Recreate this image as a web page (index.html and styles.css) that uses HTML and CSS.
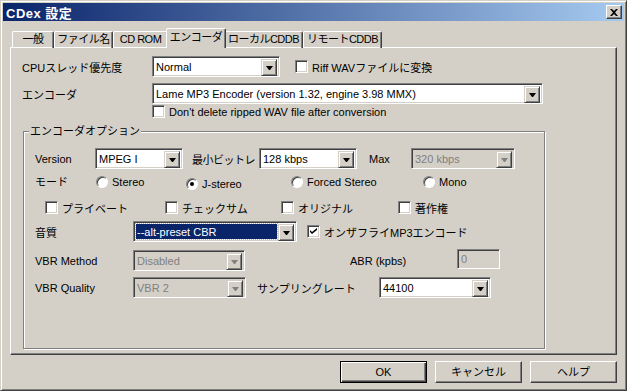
FILE: index.html
```html
<!DOCTYPE html>
<html lang="ja">
<head>
    <meta charset="UTF-8">
    <title>CDex 設定</title>
    <link rel="stylesheet" href="styles.css">
</head>
<body>

<div class="window">
    <!-- タイトルバー -->
    <div class="titlebar">
        <span class="title">CDex 設定</span>
        <span class="close">
            <svg width="8" height="7" viewBox="0 0 8 7"><path d="M0 0h2l2 2 2-2h2L5 3.5 8 7H6L4 5 2 7H0l3-3.5z" fill="#000"/></svg>
        </span>
    </div>

    <div class="client">
        <!-- タブ -->
        <div class="tabs">
            <div class="tab">一般</div>
            <div class="tab">ファイル名</div>
            <div class="tab">CD ROM</div>
            <div class="tab active">エンコーダ</div>
            <div class="tab">ローカルCDDB</div>
            <div class="tab">リモートCDDB</div>
        </div>

        <div class="panel">
            <div class="row r1">
                <span class="label w130">CPUスレッド優先度</span>
                <div class="combo w128"><span class="val">Normal</span><span class="drop"></span></div>
                <label class="check ml15"><span class="cb"></span>Riff WAVファイルに変換</label>
            </div>
            <div class="row r2">
                <span class="label w130">エンコーダ</span>
                <div class="combo w391"><span class="val">Lame MP3 Encoder (version 1.32, engine 3.98 MMX)</span><span class="drop"></span></div>
            </div>
            <div class="row r3">
                <label class="check ml130"><span class="cb"></span>Don't delete ripped WAV file after conversion</label>
            </div>

            <!-- エンコーダオプション -->
            <div class="group">
                <span class="legend">エンコーダオプション</span>

                <div class="row g1">
                    <span class="label w60">Version</span>
                    <div class="combo w88"><span class="val">MPEG I</span><span class="drop"></span></div>
                    <span class="label w76 pl9 tight">最小ビットレ</span>
                    <div class="combo w98"><span class="val">128 kbps</span><span class="drop"></span></div>
                    <span class="label w54 pl12">Max</span>
                    <div class="combo w104 off"><span class="val">320 kbps</span><span class="drop"></span></div>
                </div>

                <div class="row g2">
                    <span class="label w61 up">モード</span>
                    <label class="radio w90"><span class="rb"></span>Stereo</label>
                    <label class="radio w105 low"><span class="rb on"></span>J-stereo</label>
                    <label class="radio w132"><span class="rb"></span>Forced Stereo</label>
                    <label class="radio"><span class="rb"></span>Mono</label>
                </div>

                <div class="row g3">
                    <label class="check w120"><span class="cb"></span>プライベート</label>
                    <label class="check w116"><span class="cb"></span>チェックサム</label>
                    <label class="check w117"><span class="cb"></span>オリジナル</label>
                    <label class="check"><span class="cb"></span>著作権</label>
                </div>

                <div class="row g4">
                    <span class="label w98">音質</span>
                    <div class="combo w164"><span class="val sel">--alt-preset CBR</span><span class="drop"></span></div>
                    <label class="check ml10"><span class="cb on"><svg width="7" height="7" viewBox="0 0 7 7"><path d="M0 2l2 2 5-4v2L2 6 0 4z" fill="#000"/></svg></span>オンザフライMP3エンコード</label>
                </div>

                <div class="row g5">
                    <span class="label w98">VBR Method</span>
                    <div class="combo w112 off"><span class="val">Disabled</span><span class="drop"></span></div>
                    <span class="label w107 ml105">ABR (kpbs)</span>
                    <div class="edit off">0</div>
                </div>

                <div class="row g6">
                    <span class="label w98">VBR Quality</span>
                    <div class="combo w113 off"><span class="val">VBR 2</span><span class="drop"></span></div>
                    <span class="label w133 pl11">サンプリングレート</span>
                    <div class="combo w112"><span class="val">44100</span><span class="drop"></span></div>
                </div>
            </div>
        </div>

        <!-- ボタン -->
        <div class="buttons">
            <div class="btn def">OK</div>
            <div class="btn">キャンセル</div>
            <div class="btn">ヘルプ</div>
        </div>
    </div>
</div>

</body>
</html>
```

FILE: styles.css
```css
body {
    margin: 0;
    padding: 0;
    background-color: #d4d0c8;
    font-family: "Liberation Sans", "Noto Sans CJK JP", sans-serif;
    font-size: 11px;
    color: #000000;
}
.window {
    width: 627px;
    height: 391px;
    box-sizing: border-box;
    border: 1px solid;
    border-color: #d4d0c8 #404040 #404040 #d4d0c8;
    box-shadow: inset 1px 1px #ffffff, inset -1px -1px #808080;
    padding: 2px;
    background-color: #d4d0c8;
}
.titlebar {
    height: 18px;
    background: linear-gradient(to right, #0a246a, #a6caf0);
    display: flex;
    align-items: center;
    justify-content: space-between;
    padding: 0 2px 0 3px;
}
.title {
    color: #ffffff;
    font-weight: bold;
    font-size: 13px;
    letter-spacing: 0.5px;
}
.close {
    width: 16px;
    height: 14px;
    box-sizing: border-box;
    border: 1px solid;
    border-color: #ffffff #404040 #404040 #ffffff;
    box-shadow: inset -1px -1px #808080;
    background-color: #d4d0c8;
    display: flex;
    align-items: center;
    justify-content: center;
}
.client {
    padding: 7px 4px 0 7px;
}

/* タブ */
.tabs {
    display: flex;
    align-items: flex-end;
    height: 20px;
    margin-bottom: -1px;
    padding-left: 2px;
}
.tab {
    height: 17px;
    box-sizing: border-box;
    border-top: 1px solid #ffffff;
    border-left: 1px solid #ffffff;
    border-right: 1px solid #404040;
    box-shadow: inset -1px 0 #808080;
    border-radius: 2px 2px 0 0;
    text-align: center;
    line-height: 15px;
    white-space: nowrap;
    letter-spacing: -0.5px;
}
.tab:nth-child(1) { width: 42px; }
.tab:nth-child(2) { width: 59px; }
.tab:nth-child(3) { width: 55px; }
.tab:nth-child(5) { width: 79px; }
.tab:nth-child(6) { width: 79px; }
.tab.active {
    width: 60px;
    height: 20px;
    margin: 0 -2px;
    position: relative;
    z-index: 1;
    background-color: #d4d0c8;
    line-height: 17px;
}
.panel {
    width: 607px;
    height: 308px;
    box-sizing: border-box;
    border: 1px solid;
    border-color: #ffffff #404040 #404040 #ffffff;
    box-shadow: inset -1px -1px #808080;
    padding: 8px 0 0 11px;
}

/* 行 */
.row {
    display: flex;
    align-items: center;
    white-space: nowrap;
}
.r1 { height: 21px; }
.r2 { height: 21px; margin-top: 6px; }
.r3 { height: 13px; margin-top: 1px; }
.label { display: block; box-sizing: border-box; }
.tight { letter-spacing: -0.5px; }
.w54 { width: 54px; }
.w60 { width: 60px; }
.w61 { width: 61px; }
.w76 { width: 76px; }
.w88 { width: 88px; }
.w90 { width: 90px; }
.w98 { width: 98px; }
.w104 { width: 104px; }
.w105 { width: 105px; }
.w107 { width: 107px; }
.w112 { width: 112px; }
.w113 { width: 113px; }
.w116 { width: 116px; }
.w117 { width: 117px; }
.w120 { width: 120px; }
.w128 { width: 128px; }
.w130 { width: 130px; }
.w132 { width: 132px; }
.w133 { width: 133px; }
.w164 { width: 164px; }
.w391 { width: 391px; }
.pl9 { padding-left: 9px; }
.pl11 { padding-left: 11px; }
.pl12 { padding-left: 12px; }
.ml10 { margin-left: 10px; }
.ml15 { margin-left: 15px; }
.ml105 { margin-left: 105px; }
.ml130 { margin-left: 130px; }

/* コンボボックス */
.combo {
    display: flex;
    height: 21px;
    box-sizing: border-box;
    border: 1px solid;
    border-color: #808080 #ffffff #ffffff #808080;
    box-shadow: inset 1px 1px #404040, inset -1px -1px #d4d0c8;
    background-color: #ffffff;
    padding: 2px;
    flex-shrink: 0;
}
.combo .val {
    flex: 1;
    padding-left: 1px;
    line-height: 17px;
    overflow: hidden;
}
.combo .val.sel {
    background-color: #0a246a;
    color: #ffffff;
    outline: 1px dotted #c8c070;
    margin-right: 1px;
}
.drop {
    width: 16px;
    height: 17px;
    box-sizing: border-box;
    border: 1px solid;
    border-color: #d4d0c8 #404040 #404040 #d4d0c8;
    box-shadow: inset 1px 1px #ffffff, inset -1px -1px #808080;
    background-color: #d4d0c8;
    display: flex;
    align-items: center;
    justify-content: center;
}
.drop::after {
    content: "";
    width: 1px;
    height: 0;
    border-left: 3px solid transparent;
    border-right: 3px solid transparent;
    border-top: 4px solid #000000;
}
.combo.off {
    background-color: #d4d0c8;
    color: #808080;
}
.combo.off .drop::after {
    border-top-color: #808080;
}
.edit {
    width: 43px;
    height: 20px;
    box-sizing: border-box;
    border: 1px solid;
    border-color: #808080 #ffffff #ffffff #808080;
    box-shadow: inset 1px 1px #404040, inset -1px -1px #d4d0c8;
    padding: 2px 3px;
    line-height: 14px;
    margin-top: -4px;
}
.edit.off {
    color: #808080;
}

/* チェックボックス・ラジオ */
.check, .radio {
    display: flex;
    align-items: center;
    gap: 4px;
}
.cb {
    width: 13px;
    height: 13px;
    box-sizing: border-box;
    border: 1px solid;
    border-color: #808080 #ffffff #ffffff #808080;
    box-shadow: inset 1px 1px #404040, inset -1px -1px #d4d0c8;
    background-color: #ffffff;
    display: flex;
    align-items: center;
    justify-content: center;
    flex-shrink: 0;
}
.rb {
    width: 12px;
    height: 12px;
    box-sizing: border-box;
    border-radius: 50%;
    border: 1px solid;
    border-color: #808080 #ffffff #ffffff #808080;
    box-shadow: inset 1px 1px #404040;
    background-color: #ffffff;
    display: flex;
    align-items: center;
    justify-content: center;
    flex-shrink: 0;
}
.rb.on::after {
    content: "";
    width: 4px;
    height: 4px;
    border-radius: 50%;
    background-color: #000000;
}
.low { margin-top: 3px; }
.up { margin-top: -2px; }

/* グループボックス */
.group {
    position: relative;
    width: 522px;
    height: 218px;
    box-sizing: border-box;
    margin: 13px 0 0 1px;
    border: 1px solid #808080;
    box-shadow: inset 1px 1px #ffffff, 1px 1px #ffffff;
    padding: 16px 0 0 11px;
}
.legend {
    position: absolute;
    top: -8px;
    left: 5px;
    padding: 0 1px;
    line-height: 14px;
    background-color: #d4d0c8;
}
.g1 { height: 21px; }
.g2 { height: 14px; margin-top: 6px; }
.g3 { height: 13px; margin-top: 12px; padding-left: 10px; }
.g4 { height: 21px; margin-top: 7px; }
.g5 { height: 21px; margin-top: 8px; }
.g6 { height: 21px; margin-top: 6px; }

/* ボタン */
.buttons {
    display: flex;
    justify-content: flex-end;
    gap: 8px;
    width: 607px;
    margin-top: 6px;
}
.btn {
    width: 87px;
    height: 22px;
    box-sizing: border-box;
    border: 1px solid;
    border-color: #ffffff #404040 #404040 #ffffff;
    box-shadow: inset -1px -1px #808080;
    text-align: center;
    line-height: 20px;
}
.btn.def {
    border-color: #000000;
    box-shadow: inset 1px 1px #ffffff, inset -1px -1px #404040, inset -2px -2px #808080;
}
```
